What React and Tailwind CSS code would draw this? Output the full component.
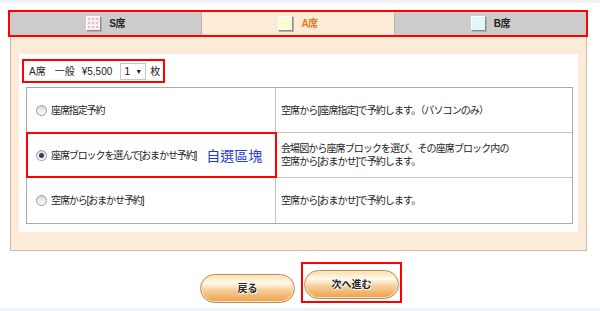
import React from 'react';

const FONT = "font-[family-name:'Liberation_Sans','Noto_Sans_CJK_JP',sans-serif]";

const Radio = ({ checked }) => (
    <span className="relative flex items-center justify-center w-[11px] h-[11px] shrink-0 rounded-full border border-[#9a9a9a] bg-[linear-gradient(#d8d8d8,#ffffff)]">
        {checked && <span className="w-[5px] h-[5px] rounded-full bg-[#2b3f6b]" />}
    </span>
);

const Swatch = ({ className }) => (
    <span className={"w-[15px] h-[15px] border border-t-white border-l-white border-r-[#8a8a8a] border-b-[#8a8a8a] shadow-[1px_1px_0_#b0b0b0] " + className} />
);

const Tab = ({ label, active, swatch }) => (
    <div className={"flex-1 flex items-center justify-center gap-[8px] " + (active ? "bg-[#fbebd7]" : "bg-[#cccccc]")}>
        <Swatch className={swatch} />
        <span className={"text-[10px] font-bold tracking-[-0.5px] " + (active ? "text-[#e67817]" : "text-[#222]")}>{label}</span>
    </div>
);

const Row = ({ checked, left, right, highlight, extra }) => (
    <div className="flex h-[45px] border-b border-[#c4c4c4] last:border-b-0">
        <div className={"w-[249px] flex items-center gap-[4px] pl-[9px] border-r border-[#c4c4c4] whitespace-nowrap " + (highlight ? "outline-2 outline-[#ff0000] -outline-offset-1" : "")}>
            <Radio checked={checked} />
            <span className="text-[10px] tracking-[-1.1px] text-[#222]">{left}</span>
            {extra}
        </div>
        <div className="flex-1 flex items-center pl-[5px] text-[10px] tracking-[-0.9px] leading-[13px] text-[#222]">
            {right}
        </div>
    </div>
);

const PillButton = ({ children }) => (
    <button className="w-[95px] h-[29px] rounded-full border border-[#c08a58] bg-[linear-gradient(#f9deab_0%,#fffaf0_30%,#f7d19a_55%,#eda04a_100%)] shadow-[inset_0_0_0_1px_#fbe7c6] text-[10px] font-bold text-[#222] [text-shadow:0_0_2px_#fff,0_0_1px_#fff,1px_1px_0_#fff]">
        {children}
    </button>
);

export default function App() {
    return (
        <div className={"w-[600px] h-[311px] bg-white flex flex-col overflow-hidden " + FONT}>
            <div className="h-[3px] bg-[#eef2fa]" />

            {/* Seat tabs */}
            <div className="ml-[8px] mt-[7px] w-[580px] border-2 border-[#ff0000] flex h-[27px]">
                <Tab label="S席" swatch="bg-[#f6eef2] bg-[radial-gradient(circle,#e9b9cc_0.8px,transparent_1px)] bg-[length:4px_4px]" />
                <div className="w-px bg-[#b5b5b5]" />
                <Tab label="A席" active swatch="bg-[#fdfbd4]" />
                <div className="w-px bg-[#b8b8b8]" />
                <Tab label="B席" swatch="bg-[#dff6fb]" />
            </div>

            {/* Panel */}
            <div className="ml-[10px] w-[577px] bg-[#fbebd7] border-x border-b border-[#c7bcae] px-[8px] pt-[17px] pb-[18px]">
                <div className="bg-white h-[178px] pt-[5px] pl-[3px]">
                    <div className="w-[143px] h-[24px] border-2 border-[#ff0000] flex items-center pl-[5px] text-[10px] text-[#222] whitespace-nowrap">
                        <span className="shrink-0">A席</span>
                        <span className="shrink-0 ml-[9px]">一般</span>
                        <span className="shrink-0 ml-[7px]">¥5,500</span>
                        <span className="shrink-0 ml-[8px] w-[26px] h-[17px] border border-[#c8c8c8] flex items-center justify-between px-[3px] text-[11px]">
                            1
                            <span className="text-[7px] leading-none">▼</span>
                        </span>
                        <span className="shrink-0 ml-[4px]">枚</span>
                    </div>

                    <div className="mt-[4px] ml-[4px] w-[547px] border border-[#a9a9a9] bg-white">
                        <Row left="座席指定予約" right="空席から[座席指定]で予約します。（パソコンのみ）" />
                        <Row
                            checked
                            highlight
                            left="座席ブロックを選んで[おまかせ予約]"
                            extra={<span className="ml-[6px] text-[14px] tracking-[0px] text-[#2339d8] font-[family-name:'Noto_Sans_CJK_TC',sans-serif]">自選區塊</span>}
                            right={<span>会場図から座席ブロックを選び、その座席ブロック内の<br />空席から[おまかせ]で予約します。</span>}
                        />
                        <Row left="空席から[おまかせ予約]" right="空席から[おまかせ]で予約します。" />
                    </div>
                </div>
            </div>

            {/* Buttons */}
            <div className="mt-[11px] flex justify-center items-end gap-[6px] pl-[2px]">
                <PillButton>戻る</PillButton>
                <div className="border-2 border-[#ff0000] px-[1px] pt-[6px] pb-[2px]">
                    <PillButton>次へ進む</PillButton>
                </div>
            </div>

            <div className="mt-auto h-[3px] bg-[#eef2fa]" />
        </div>
    );
}
